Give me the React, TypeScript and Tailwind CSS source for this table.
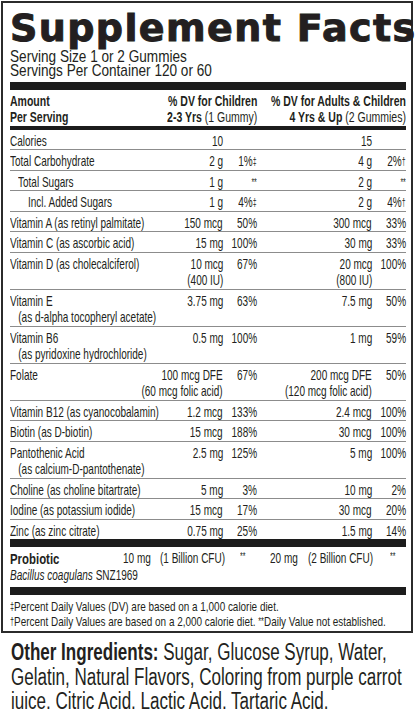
import React from 'react';

// Helvetica Condensed look: Liberation Sans squeezed horizontally
type Kind = 'reg' | 'bold' | 'head' | 'serv' | 'foot' | 'ingr';

const scaleFor = (k: Kind) =>
  k === 'bold'
    ? 'scale-x-[0.76]'
    : k === 'head'
    ? 'scale-x-[0.75]'
    : k === 'serv'
    ? 'scale-x-[0.8]'
    : k === 'foot'
    ? 'scale-x-[0.735]'
    : k === 'ingr'
    ? 'scale-x-[0.74]'
    : 'scale-x-[0.69]';

const Cond = ({
  children,
  right,
  k = 'reg',
  className = '',
}: {
  children: React.ReactNode;
  right?: boolean;
  k?: Kind;
  className?: string;
}) => (
  <div className={`w-max shrink-0 whitespace-nowrap ${right ? 'origin-right text-right' : 'origin-left'} ${scaleFor(k)} ${className}`}>
    {children}
  </div>
);

const Sup = ({ children }: { children: React.ReactNode }) => (
  <sup className="text-[10px] relative -top-[1px]">{children}</sup>
);

interface Row {
  name: string;
  sub?: string;
  indent?: number;
  child: string[];
  childPct: React.ReactNode;
  adult: string[];
  adultPct: React.ReactNode;
}

const rows: Row[] = [
  { name: 'Calories', child: ['10'], childPct: '', adult: ['15'], adultPct: '' },
  { name: 'Total Carbohydrate', child: ['2 g'], childPct: <>1%<Sup>‡</Sup></>, adult: ['4 g'], adultPct: <>2%<Sup>†</Sup></> },
  { name: 'Total Sugars', indent: 1, child: ['1 g'], childPct: <Sup>**</Sup>, adult: ['2 g'], adultPct: <Sup>**</Sup> },
  { name: 'Incl. Added Sugars', indent: 2, child: ['1 g'], childPct: <>4%<Sup>‡</Sup></>, adult: ['2 g'], adultPct: <>4%<Sup>†</Sup></> },
  { name: 'Vitamin A (as retinyl palmitate)', child: ['150 mcg'], childPct: '50%', adult: ['300 mcg'], adultPct: '33%' },
  { name: 'Vitamin C (as ascorbic acid)', child: ['15 mg'], childPct: '100%', adult: ['30 mg'], adultPct: '33%' },
  { name: 'Vitamin D (as cholecalciferol)', child: ['10 mcg', '(400 IU)'], childPct: '67%', adult: ['20 mcg', '(800 IU)'], adultPct: '100%' },
  { name: 'Vitamin E', sub: '(as d-alpha tocopheryl acetate)', child: ['3.75 mg'], childPct: '63%', adult: ['7.5 mg'], adultPct: '50%' },
  { name: 'Vitamin B6', sub: '(as pyridoxine hydrochloride)', child: ['0.5 mg'], childPct: '100%', adult: ['1 mg'], adultPct: '59%' },
  { name: 'Folate', child: ['100 mcg DFE', '(60 mcg folic acid)'], childPct: '67%', adult: ['200 mcg DFE', '(120 mcg folic acid)'], adultPct: '50%' },
  { name: 'Vitamin B12 (as cyanocobalamin)', child: ['1.2 mcg'], childPct: '133%', adult: ['2.4 mcg'], adultPct: '100%' },
  { name: 'Biotin (as D-biotin)', child: ['15 mcg'], childPct: '188%', adult: ['30 mcg'], adultPct: '100%' },
  { name: 'Pantothenic Acid', sub: '(as calcium-D-pantothenate)', child: ['2.5 mg'], childPct: '125%', adult: ['5 mg'], adultPct: '100%' },
  { name: 'Choline (as choline bitartrate)', child: ['5 mg'], childPct: '3%', adult: ['10 mg'], adultPct: '2%' },
  { name: 'Iodine (as potassium iodide)', child: ['15 mcg'], childPct: '17%', adult: ['30 mcg'], adultPct: '20%' },
  { name: 'Zinc (as zinc citrate)', child: ['0.75 mg'], childPct: '25%', adult: ['1.5 mg'], adultPct: '14%' },
];

const FactRow = ({ row, first }: { row: Row; first: boolean }) => {
  const pad = row.indent === 1 ? 'pl-[8px]' : row.indent === 2 ? 'pl-[18px]' : '';
  return (
    <div className={`${first ? '' : 'border-t border-[#8c8c8c]'} grid grid-cols-[minmax(0,1fr)_34px_115px_34px] pt-[3px] leading-[16.5px]`}>
      <div className="flex min-w-0">
        <div className={`min-w-0 flex-1 ${pad}`}>
          <Cond>
            <div>{row.name}</div>
            {row.sub && <div className="pl-[12px]">{row.sub}</div>}
          </Cond>
        </div>
        <Cond right>
          {row.child.map((c) => (
            <div key={c}>{c}</div>
          ))}
        </Cond>
      </div>
      <div className="flex justify-end">
        <Cond right>{row.childPct}</Cond>
      </div>
      <div className="flex justify-end">
        <Cond right>
          {row.adult.map((a) => (
            <div key={a}>{a}</div>
          ))}
        </Cond>
      </div>
      <div className="flex justify-end">
        <Cond right>{row.adultPct}</Cond>
      </div>
    </div>
  );
};

export default function App() {
  return (
    <div className="w-[416px] min-h-[709px] bg-white text-[#231f20] pt-px pl-px font-['Liberation_Sans',Arial,sans-serif] overflow-hidden">
      <div className="w-[412px] border-2 border-[#2b2b2b] pl-[7px] pr-[5px] pt-[4.5px] pb-[2px]">
        <h1 className="font-['DejaVu_Sans',sans-serif] font-bold text-[38px] leading-[40px] tracking-[1.4px] [-webkit-text-stroke:1px_#231f20] whitespace-nowrap">
          Supplement Facts
        </h1>
        <div className="text-[17px] leading-[14px] mt-[2.5px]">
          <Cond k="serv">
            <div>Serving Size 1 or 2 Gummies</div>
            <div>Servings Per Container 120 or 60</div>
          </Cond>
        </div>
        <div className="h-[8px] bg-[#1c1c1c] mt-[4px]" />

        {/* column header */}
        <div className="grid grid-cols-[minmax(0,1fr)_149px] text-[14px] leading-[16px] pt-[2.8px]">
          <div className="flex min-w-0">
            <div className="min-w-0 flex-1 font-bold">
              <Cond k="head">
                <div>Amount</div>
                <div>Per Serving</div>
              </Cond>
            </div>
            <Cond right k="head">
              <div className="font-bold">% DV for Children</div>
              <div>
                <span className="font-bold">2-3 Yrs</span> (1 Gummy)
              </div>
            </Cond>
          </div>
          <div className="flex justify-end">
            <Cond right k="head">
              <div className="font-bold">% DV for Adults &amp; Children</div>
              <div>
                <span className="font-bold">4 Yrs &amp; Up</span> (2 Gummies)
              </div>
            </Cond>
          </div>
        </div>
        <div className="h-[4px] bg-[#1c1c1c] mt-[1px]" />

        <div className="text-[14.5px]">
          {rows.map((r, i) => (
            <FactRow key={r.name} row={r} first={i === 0} />
          ))}
        </div>

        <div className="h-[8px] bg-[#1c1c1c]" />

        {/* probiotic */}
        <div className="text-[14.5px] leading-[17px] pt-[3px] pb-[3px]">
          <div className="flex">
            <div className="w-[113px] shrink-0 font-bold text-[15px]">
              <Cond k="bold">Probiotic</Cond>
            </div>
            <div className="w-[37px] shrink-0">
              <Cond>10 mg</Cond>
            </div>
            <div className="w-[80px] shrink-0">
              <Cond>(1 Billion CFU)</Cond>
            </div>
            <div className="w-[30px] shrink-0">
              <Cond className="text-[10px] relative -top-[2px]">**</Cond>
            </div>
            <div className="w-[38px] shrink-0">
              <Cond>20 mg</Cond>
            </div>
            <div className="w-[82px] shrink-0">
              <Cond>(2 Billion CFU)</Cond>
            </div>
            <div>
              <Cond className="text-[10px] relative -top-[2px]">**</Cond>
            </div>
          </div>
          <Cond>
            <i>Bacillus coagulans</i> SNZ1969
          </Cond>
        </div>
        <div className="h-[8px] bg-[#1c1c1c]" />

        <div className="text-[13.5px] leading-[14.5px] pt-[5px]">
          <Cond k="foot">
            <div>
              <Sup>‡</Sup>Percent Daily Values (DV) are based on a 1,000 calorie diet.
            </div>
            <div>
              <Sup>†</Sup>Percent Daily Values are based on a 2,000 calorie diet. <Sup>**</Sup>Daily Value not established.
            </div>
          </Cond>
        </div>
      </div>

      <div className="text-[23px] leading-[24.5px] px-[10px] pt-[7px]">
        <Cond k="ingr">
          <div>
            <span className="font-bold">Other Ingredients:</span> Sugar, Glucose Syrup, Water,
          </div>
          <div>Gelatin, Natural Flavors, Coloring from purple carrot</div>
          <div>juice, Citric Acid, Lactic Acid, Tartaric Acid.</div>
        </Cond>
      </div>
    </div>
  );
}
